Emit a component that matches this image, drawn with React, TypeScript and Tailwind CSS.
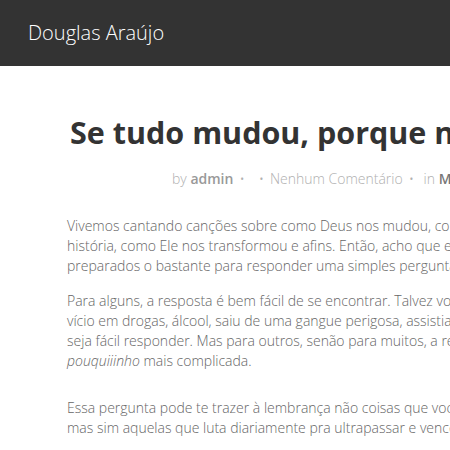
export default function App() {
  const body = "font-['Open_Sans',sans-serif]";
  return (
    <div className={`w-[450px] h-[450px] overflow-hidden bg-white ${body}`}>
      <header className="h-[66px] bg-[#333333] flex items-center pl-[28px]">
        <span className="text-[20px] font-light text-white whitespace-nowrap">Douglas Araújo</span>
      </header>
      <main className="pl-[67px] pt-[46px] whitespace-nowrap">
        <h1 className="pl-[3px] text-[30.5px] leading-[40px] font-bold text-[#333333]">
          Se tudo mudou, porque nada mudou?
        </h1>
        <div className="pl-[105px] mt-[17px] text-[14px] leading-[20px] font-light text-[#b0b0b0]">
          by <span className="font-semibold text-[#999999]">admin</span>
          <span className="mx-[6px]">•</span>
          <span className="ml-[8px] mr-[6px]">•</span>Nenhum Comentário
          <span className="mx-[6px]">•</span> in <span className="font-semibold text-[#777777]">Meditações</span>
        </div>
        <div className="mt-[27px] text-[14px] leading-[20px] font-light text-[#666666]">
          <p className="mb-[15px]">
            <span className="block">Vivemos cantando canções sobre como Deus nos mudou, como Ele entrou na nossa</span>
            <span className="block">história, como Ele nos transformou e afins. Então, acho que estamos todos</span>
            <span className="block">preparados o bastante para responder uma simples pergunta: o que Ele mudou?</span>
          </p>
          <p className="mb-[27px]">
            <span className="block">Para alguns, a resposta é bem fácil de se encontrar. Talvez você tenha saído de um</span>
            <span className="block">vício em drogas, álcool, saiu de uma gangue perigosa, assistia pornografia, e talvez</span>
            <span className="block">seja fácil responder. Mas para outros, senão para muitos, a resposta é um</span>
            <span className="block"><em>pouquiiinho</em> mais complicada.</span>
          </p>
          <p className="mb-[15px]">
            <span className="block">Essa pergunta pode te trazer à lembrança não coisas que você já venceu,</span>
            <span className="block">mas sim aquelas que luta diariamente pra ultrapassar e vencer.</span>
          </p>
        </div>
      </main>
    </div>
  );
}
